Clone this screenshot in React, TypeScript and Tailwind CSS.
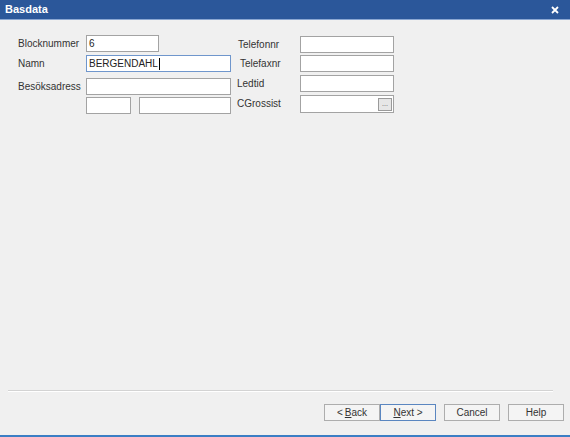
import React from 'react';

const font = { fontFamily: '"Liberation Sans", Arial, sans-serif' };

const Field = ({ w, value, focused, caret, extraClass = '' }: { w: string; value?: string; focused?: boolean; caret?: boolean; extraClass?: string }) => (
  <div
    className={`${w} h-[17px] bg-white border flex items-center pl-[2px] text-[10px] text-[#222] leading-none ${
      focused ? 'border-[#6f96cc]' : 'border-[#a3a3a3]'
    } ${extraClass}`}
  >
    {value}
    {caret && <span className="inline-block w-px h-[12px] bg-black ml-px" />}
  </div>
);

const Label = ({ children, className = '' }: { children: React.ReactNode; className?: string }) => (
  <span className={`text-[10px] text-[#333] leading-none ${className}`}>{children}</span>
);

const Button = ({ children, primary = false }: { children: React.ReactNode; primary?: boolean }) => (
  <button
    type="button"
    className={`h-[17px] w-[56px] bg-[#f4f4f4] border text-[10px] text-[#333] leading-none flex items-center justify-center ${
      primary ? 'border-[#5a86c0]' : 'border-[#adadad]'
    }`}
  >
    {children}
  </button>
);

export default function App() {
  return (
    <div className="w-[570px] h-[437px] bg-[#f0f0f0] flex flex-col overflow-hidden" style={font}>
      {/* title bar */}
      <div className="h-[20px] bg-[#2b579a] border-b border-[#8ba7d2] flex items-center justify-between pl-[5px] pr-[11px] shrink-0">
        <span className="text-[11px] font-bold text-white leading-none">Basdata</span>
        <svg width="8" height="8" viewBox="0 0 8 8">
          <path d="M1 1L7 7M7 1L1 7" stroke="white" strokeWidth="1.8" />
        </svg>
      </div>

      {/* form */}
      <div className="flex-1 flex">
        {/* left column */}
        <div className="w-[231px] pl-[18px] pt-[15px] flex flex-col">
          <div className="flex items-center h-[17px]">
            <Label className="w-[68px]">Blocknummer</Label>
            <Field w="w-[73px]" value="6" />
          </div>
          <div className="flex items-center h-[17px] mt-[3px]">
            <Label className="w-[68px]">Namn</Label>
            <Field w="w-[145px]" value="BERGENDAHL" focused caret />
          </div>
          <div className="flex items-center h-[17px] mt-[6px]">
            <Label className="w-[68px]">Besöksadress</Label>
            <Field w="w-[145px]" />
          </div>
          <div className="flex items-center h-[17px] mt-[2px] pl-[68px] gap-[8px]">
            <Field w="w-[45px]" />
            <Field w="w-[92px]" />
          </div>
        </div>

        {/* right column */}
        <div className="w-[163px] pl-[6px] pt-[16px] flex flex-col">
          <div className="flex items-center h-[17px]">
            <Label className="w-[63px] pl-[1px]">Telefonnr</Label>
            <Field w="w-[94px]" />
          </div>
          <div className="flex items-center h-[17px] mt-[2px]">
            <Label className="w-[63px] pl-[3px]">Telefaxnr</Label>
            <Field w="w-[94px]" />
          </div>
          <div className="flex items-center h-[17px] mt-[3px]">
            <Label className="w-[63px]">Ledtid</Label>
            <Field w="w-[94px]" />
          </div>
          <div className="flex items-center h-[18px] mt-[3px]">
            <Label className="w-[63px]">CGrossist</Label>
            <div className="w-[94px] h-[18px] bg-white border border-[#a3a3a3] flex items-center justify-end pr-[1px]">
              <div className="w-[14px] h-[13px] bg-[#e6e6e6] border border-[#9a9a9a] flex items-end justify-center pb-[3px]">
                <span className="text-[7px] leading-none text-[#555]">...</span>
              </div>
            </div>
          </div>
        </div>
      </div>

      {/* separator */}
      <div className="mx-[8px] mr-[17px] h-px bg-[#d3d3d3] border-b border-white box-content shrink-0" />

      {/* buttons */}
      <div className="h-[43px] flex items-start pt-[12px] pl-[324px] shrink-0">
        <Button>
          &lt; <span className="underline ml-[2px]">B</span>ack
        </Button>
        <Button primary>
          <span className="underline">N</span>ext &gt;
        </Button>
        <div className="ml-[8px]">
          <Button>Cancel</Button>
        </div>
        <div className="ml-[8px]">
          <Button>Help</Button>
        </div>
      </div>

      <div className="h-[2px] bg-[#3b7ec4] shrink-0" />
    </div>
  );
}
